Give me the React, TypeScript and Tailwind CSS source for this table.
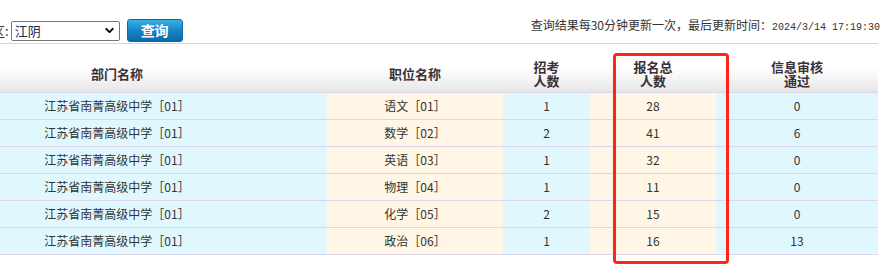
import { ChevronDown } from "lucide-react";

interface Row {
  dept: string;
  post: string;
  plan: number;
  total: number;
  passed: number;
}

const rows: Row[] = [
  { dept: "江苏省南菁高级中学［01］", post: "语文［01］", plan: 1, total: 28, passed: 0 },
  { dept: "江苏省南菁高级中学［01］", post: "数学［02］", plan: 2, total: 41, passed: 6 },
  { dept: "江苏省南菁高级中学［01］", post: "英语［03］", plan: 1, total: 32, passed: 0 },
  { dept: "江苏省南菁高级中学［01］", post: "物理［04］", plan: 1, total: 11, passed: 0 },
  { dept: "江苏省南菁高级中学［01］", post: "化学［05］", plan: 2, total: 15, passed: 0 },
  { dept: "江苏省南菁高级中学［01］", post: "政治［06］", plan: 1, total: 16, passed: 13 },
];

// first column runs off the left edge of the shot
const cols = "grid grid-cols-[420px_176px_87px_126px_162px]";
const font = { fontFamily: '"Noto Sans CJK SC", "Noto Sans", sans-serif' };

function HeadCell({ lines }: { lines: string[] }) {
  return (
    <div className="flex flex-col items-center justify-center pt-[12px] text-[13px] font-bold leading-[14px] text-[#3a3038]">
      {lines.map((line) => (
        <span key={line}>{line}</span>
      ))}
    </div>
  );
}

export default function App() {
  return (
    <div className="relative h-[272px] w-[888px] overflow-hidden bg-white text-[#333]" style={font}>
      <div className="flex h-[43px] w-[880px] items-end">
        <div className="flex items-center pb-[1px]">
          <span className="-ml-[8px] text-[13px] leading-[20px] text-[#333]">区:</span>
          <div className="ml-[2px] flex h-[20px] w-[109px] items-center justify-between rounded-[2px] border border-[#767676] bg-white px-[3px]">
            <span className="text-[13px] leading-[18px] text-[#1a2a4a]">江阴</span>
            <ChevronDown size={13} strokeWidth={3.5} className="text-black" />
          </div>
          <button className="ml-[7px] flex h-[23px] w-[56px] items-center justify-center rounded-[3px] border border-[#0d6aa6] bg-gradient-to-b from-[#34b2e6] via-[#1786c6] to-[#0a6aab] text-[14px] font-bold text-white">
            查询
          </button>
        </div>
        <div className="ml-auto pb-[8px] text-[12px] leading-[14px] text-[#333]">
          查询结果每30分钟更新一次，最后更新时间：
          <span style={{ fontFamily: '"Liberation Mono", monospace' }} className="text-[10px]">
            2024/3/14 17:19:30
          </span>
        </div>
      </div>

      <div className="-ml-[93px] w-[971px]">
        <div className={`${cols} h-[50px] border-t border-b border-t-[#d6d6d6] border-b-[#ddd5ea] bg-gradient-to-b from-white via-white to-[#e6e6e6]`}>
          <HeadCell lines={["部门名称"]} />
          <HeadCell lines={["职位名称"]} />
          <HeadCell lines={["招考", "人数"]} />
          <HeadCell lines={["报名总", "人数"]} />
          <HeadCell lines={["信息审核", "通过"]} />
        </div>
        {rows.map((row, i) => (
          <div key={i} className={`${cols} h-[27px] border-b border-[#ddd5ea] text-[12px]`}>
            <div className="flex items-center justify-center bg-[#e1f7fe]">{row.dept}</div>
            <div className="flex items-center justify-center bg-[#fff6e5]">{row.post}</div>
            <div className="flex items-center justify-center bg-[#e1f7fe]">{row.plan}</div>
            <div className="flex items-center justify-center bg-[#fff6e5]">{row.total}</div>
            <div className="flex items-center justify-center bg-[#e1f7fe]">{row.passed}</div>
          </div>
        ))}
      </div>

      <div className="pointer-events-none absolute left-[613px] top-[53px] h-[211px] w-[116px] rounded-[4px] border-[3px] border-[#ff2418]" />
    </div>
  );
}
